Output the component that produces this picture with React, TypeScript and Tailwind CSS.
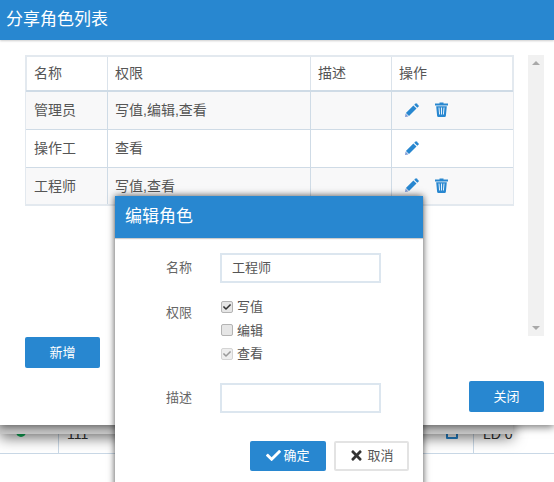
import React from "react";
import { FaCheck, FaTimes } from "react-icons/fa";

const FONT = "font-['Liberation_Sans','Noto_Sans_CJK_SC',sans-serif]";

function Pencil() {
  return (
    <svg width="14" height="14" viewBox="0 0 14 14" className="ml-[-1px] text-[#2887d0]">
      <path d="M10.6 0.4q.5-.4 1 0l2 2q.4.5 0 1L12.3 4.8 9.2 1.7z" fill="currentColor" />
      <path d="M8.4 2.5l3.1 3.1L4 13 .9 9.9z" fill="currentColor" />
      <path d="M.6 10.6l2.8 2.8L0 14z" fill="#7f9bd6" />
    </svg>
  );
}

function Trash() {
  return (
    <svg width="13" height="15" viewBox="0 0 13 15" className="text-[#2887d0]">
      <rect x="4.5" y="0.5" width="4" height="1.5" fill="currentColor" />
      <rect x="0" y="1.5" width="13" height="2" fill="currentColor" />
      <path d="M1.2 4.2h10.6l-.9 9.6q-.1 1.2-1.3 1.2H3.4q-1.2 0-1.3-1.2z" fill="currentColor" />
      <path d="M4 5.5l.6 7M6.5 5.5v7M9 5.5l-.6 7" stroke="#e4f0fa" strokeWidth="1" fill="none" />
    </svg>
  );
}

function Row({ name, perm, del, striped, h }: { name: string; perm: string; del?: boolean; striped?: boolean; h: string }) {
  return (
    <div className={`flex border-b border-[#cfdbe6] ${h} ${striped ? "bg-[#f8f8f9]" : "bg-white"}`}>
      <div className="flex w-[82px] items-center border-r border-[#cfdbe6] pl-[8px]">{name}</div>
      <div className="flex w-[203px] items-center border-r border-[#cfdbe6] pl-[7px]">{perm}</div>
      <div className="w-[81px] border-r border-[#cfdbe6]" />
      <div className="flex flex-1 items-center pb-[2px] pl-[14px]">
        <Pencil />
        {del && (
          <span className="ml-[16px] flex">
            <Trash />
          </span>
        )}
      </div>
    </div>
  );
}

function Check({ state }: { state: "on" | "off" | "disabled" }) {
  return (
    <span
      className={`flex h-[12px] w-[12px] items-center justify-center rounded-[2px] border ${
        state === "disabled" ? "border-[#d4d4d4] bg-[#eeeeee]" : "border-[#b4b4b4] bg-[#e6e6e6]"
      }`}
    >
      {state !== "off" && (
        <FaCheck className={`h-[8px] w-[8px] ${state === "on" ? "text-[#333]" : "text-[#9a9a9a]"}`} />
      )}
    </span>
  );
}

export default function App() {
  return (
    <div className={`relative h-[482px] w-[554px] overflow-hidden bg-white text-[14px] text-[#555] ${FONT}`}>
      {/* page behind the dialogs */}
      <div className="flex h-[454px] items-end border-b border-[#c9d8e6] text-[#333]">
        <div className="flex h-[40px] w-[59px] items-start border-r border-[#c9d8e6] pl-[16px] pt-[14px]">
          <span className="h-[10px] w-[10px] rounded-full bg-[#12b85e]" />
        </div>
        <div className="h-[40px] flex-1 pl-[8px] pt-[13px] text-[14px] leading-[16px]">111</div>
        <div className="flex h-[40px] w-[52px] justify-center border-r border-[#c9d8e6] pl-[8px] pt-[14px]">
          <span className="h-[12px] w-[12px] rounded-[1px] border-2 border-[#2887d0]" />
        </div>
        <div className="h-[40px] w-[80px] pl-[9px] pt-[13px] text-[14px] leading-[16px]">LD 0</div>
      </div>

      {/* under layer of the list dialog */}
      <div className="absolute left-0 top-[400px] h-[34px] w-[513px] bg-[#c9c9c9] shadow-[0_4px_14px_rgba(0,0,0,0.55)]" />

      {/* list dialog */}
      <div className="absolute left-0 top-0 flex h-[425px] w-[554px] flex-col bg-white shadow-[0_2px_8px_rgba(0,0,0,0.55)]">
        <div className="flex h-[40px] items-center bg-[#2887d0] pl-[6px] text-[17px] text-white shadow-[0_1px_2px_rgba(0,0,0,0.2)]">
          分享角色列表
        </div>
        <div className="flex flex-1 flex-col px-[10px] pl-[25px] pt-[15px]">
          <div className="flex items-start">
            <div className="w-[489px] border-2 border-[#e3e9ef] [&>div]:-mx-px">
              <div className="flex h-[35px] border-b-2 border-[#cfdbe6]">
                <div className="flex w-[82px] items-center border-r border-[#dbe3eb] pl-[8px]">名称</div>
                <div className="flex w-[203px] items-center border-r border-[#dbe3eb] pl-[7px]">权限</div>
                <div className="flex w-[81px] items-center border-r border-[#dbe3eb] pl-[7px]">描述</div>
                <div className="flex flex-1 items-center pl-[7px]">操作</div>
              </div>
              <Row name="管理员" perm="写值,编辑,查看" del striped h="h-[38px]" />
              <Row name="操作工" perm="查看" h="h-[38px]" />
              <Row name="工程师" perm="写值,查看" del striped h="h-[36px] border-b-0" />
            </div>
            <div className="ml-[14px] flex h-[281px] w-[16px] flex-col items-center justify-between bg-[#f1f1f1] py-[6px]">
              <span className="h-0 w-0 border-x-[4px] border-b-[4px] border-x-transparent border-b-[#a8a8a8]" />
              <span className="h-0 w-0 border-x-[4px] border-t-[4px] border-x-transparent border-t-[#a8a8a8]" />
            </div>
          </div>
          <div className="mt-[1px]">
            <button className="h-[31px] w-[75px] rounded-[2px] bg-[#2887d0] text-[13px] text-white">新增</button>
          </div>
          <div className="mt-[13px] flex justify-end">
            <button className="h-[31px] w-[75px] rounded-[2px] bg-[#2887d0] text-[13px] text-white">关闭</button>
          </div>
        </div>
      </div>

      {/* edit dialog */}
      <div className="absolute left-[115px] top-[196px] flex h-[300px] w-[308px] flex-col bg-white shadow-[0_0_7px_rgba(0,0,0,0.7)]">
        <div className="flex h-[42px] items-center bg-[#2887d0] pl-[10px] text-[17px] text-white shadow-[0_1px_1px_rgba(0,0,0,0.2)]">
          编辑角色
        </div>
        <div className="flex flex-col pt-[15px] text-[13px]">
          <div className="flex items-center">
            <span className="w-[105px] pr-[28px] text-right text-[#666]">名称</span>
            <div className="flex h-[30px] w-[161px] items-center border-2 border-[#dce6ef] pl-[10px]">工程师</div>
          </div>
          <div className="mt-[14px] flex">
            <span className="w-[105px] pr-[28px] pt-[6px] text-right text-[#666]">权限</span>
            <div className="flex flex-col gap-[4px] pl-[1px]">
              <label className="flex h-[19.5px] items-center gap-[4px]">
                <Check state="on" />
                写值
              </label>
              <label className="flex h-[19.5px] items-center gap-[4px]">
                <Check state="off" />
                编辑
              </label>
              <label className="flex h-[19.5px] items-center gap-[4px]">
                <Check state="disabled" />
                查看
              </label>
            </div>
          </div>
          <div className="mt-[19px] flex items-center">
            <span className="w-[105px] pr-[28px] text-right text-[#666]">描述</span>
            <div className="h-[30px] w-[161px] border-2 border-[#dce6ef]" />
          </div>
          <div className="mt-[28px] flex justify-end gap-[8px] pr-[14px]">
            <button className="flex h-[30px] w-[76px] items-center justify-center gap-[2px] rounded-[2px] bg-[#2887d0] text-white">
              <FaCheck className="h-[15px] w-[15px]" />
              确定
            </button>
            <button className="flex h-[30px] w-[75px] items-center justify-center gap-[3px] rounded-[2px] border-2 border-[#e3e3e3] bg-white text-[#555]">
              <FaTimes className="h-[15px] w-[15px] text-[#333]" />
              取消
            </button>
          </div>
        </div>
      </div>
    </div>
  );
}
